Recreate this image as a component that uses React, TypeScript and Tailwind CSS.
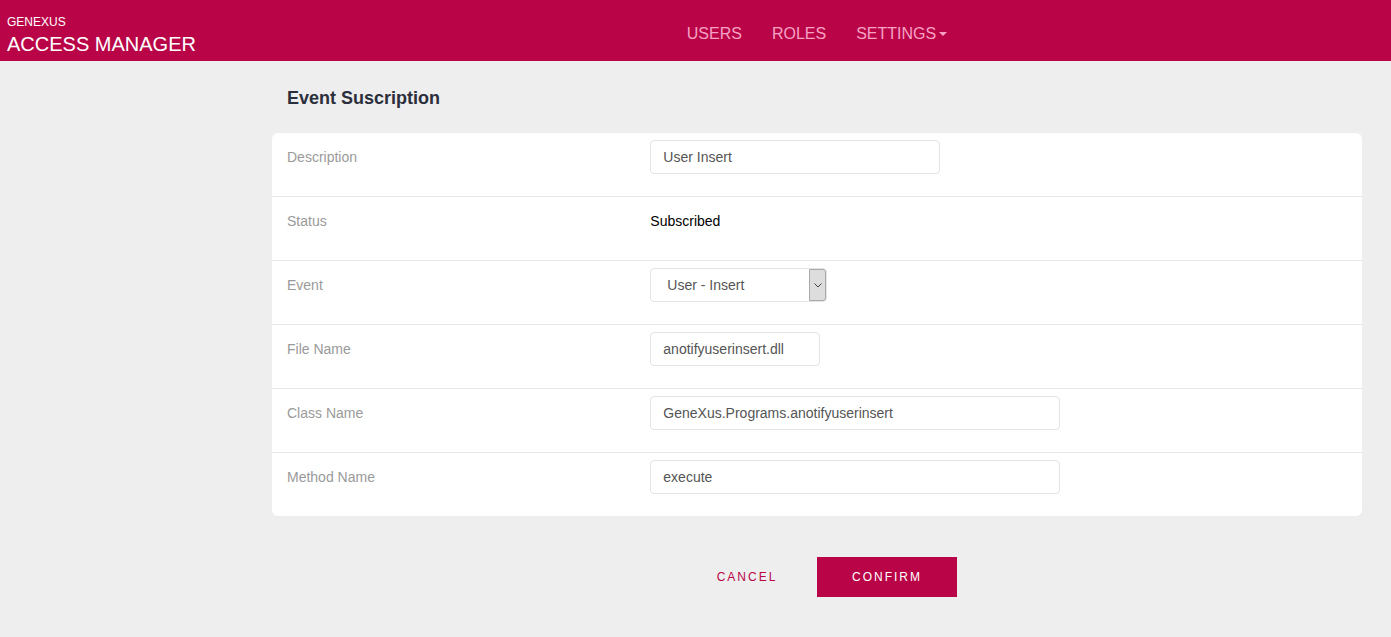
import { ReactNode } from 'react';

const CRIMSON = '#b90547';

type Row = {
  label: string;
  content: ReactNode;
};

function TextInput({ value, width }: { value: string; width: string }) {
  return (
    <div
      className={`${width} h-[34px] flex items-center px-[12px] border border-[#e4e4e4] rounded-[4px] bg-white text-[14px] text-[#555555]`}
    >
      {value}
    </div>
  );
}

function SelectBox({ value }: { value: string }) {
  return (
    <div className="w-[177px] h-[34px] flex border border-[#e4e4e4] rounded-[4px] bg-white text-[14px] text-[#555555]">
      <div className="flex-1 flex items-center pl-[16px]">{value}</div>
      <div className="w-[17px] h-full flex items-center justify-center bg-[#dddddd] border border-[#a9a9a9] rounded-r-[3px]">
        <svg width="8" height="5" viewBox="0 0 8 5" fill="none">
          <path d="M0.5 0.5 L4 4 L7.5 0.5" stroke="#444" strokeWidth="1" />
        </svg>
      </div>
    </div>
  );
}

export default function App() {
  const rows: Row[] = [
    { label: 'Description', content: <TextInput value="User Insert" width="w-[290px]" /> },
    {
      label: 'Status',
      content: <div className="h-[34px] flex items-center text-[14px] text-black">Subscribed</div>,
    },
    { label: 'Event', content: <SelectBox value="User - Insert" /> },
    { label: 'File Name', content: <TextInput value="anotifyuserinsert.dll" width="w-[170px]" /> },
    {
      label: 'Class Name',
      content: <TextInput value="GeneXus.Programs.anotifyuserinsert" width="w-[410px]" />,
    },
    { label: 'Method Name', content: <TextInput value="execute" width="w-[410px]" /> },
  ];

  return (
    <div className="min-h-[637px] bg-[#eeeeee] font-['Liberation_Sans',Arial,sans-serif]">
      {/* Header */}
      <header className="h-[61px] flex text-white" style={{ backgroundColor: CRIMSON }}>
        <div className="w-[272px] shrink-0 pl-[7px] pt-[15px]">
          <div className="text-[12px] leading-[14px]">GENEXUS</div>
          <div className="text-[20px] leading-[24px] mt-[3px]">ACCESS MANAGER</div>
        </div>
        <nav className="flex-1 mr-[29px] pt-[6px] flex justify-center items-center text-[16px] text-[#f7a1c4]">
          <span className="px-[15px]">USERS</span>
          <span className="px-[15px]">ROLES</span>
          <span className="px-[15px] flex items-center">
            SETTINGS
            <span className="ml-[3px] w-0 h-0 border-x-[4px] border-x-transparent border-t-[4px] border-t-[#f7a1c4]" />
          </span>
        </nav>
      </header>

      <main className="pl-[272px] pr-[29px]">
        <h1 className="px-[15px] h-[72px] pt-[2px] flex items-center text-[18px] font-bold text-[#2b2f3b]">
          Event Suscription
        </h1>

        <div className="bg-white rounded-[6px]">
          {rows.map((row, i) => (
            <div
              key={row.label}
              className={`grid grid-cols-3 pt-[7px] ${
                i < rows.length - 1 ? 'h-[64px] border-b border-[#e6e6e6]' : 'h-[63px]'
              }`}
            >
              <div className="px-[15px] h-[34px] flex items-center text-[14px] text-[#9a9a9a]">
                {row.label}
              </div>
              <div className="col-span-2 px-[15px]">{row.content}</div>
            </div>
          ))}
        </div>

        <div className="flex justify-center mt-[41px]">
          <button className="w-[140px] h-[40px] text-[12px] tracking-[2px] text-[#b90547] bg-transparent">
            CANCEL
          </button>
          <button
            className="w-[140px] h-[40px] text-[12px] tracking-[2px] text-white"
            style={{ backgroundColor: CRIMSON }}
          >
            CONFIRM
          </button>
        </div>
      </main>
    </div>
  );
}
